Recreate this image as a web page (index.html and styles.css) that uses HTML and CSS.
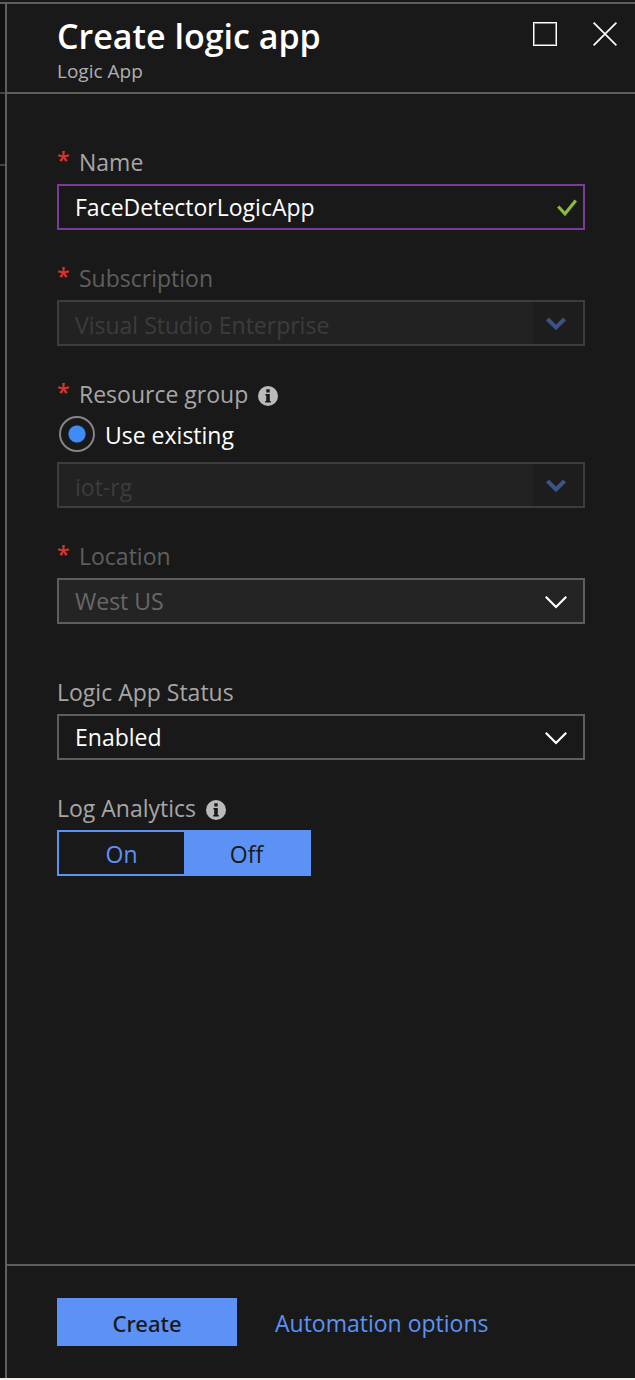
FILE: index.html
```html
<!DOCTYPE html>
<html lang="en">
<head>
<meta charset="utf-8">
<meta name="viewport" content="width=device-width, initial-scale=1">
<title>Create logic app</title>
<link rel="stylesheet" href="styles.css">
</head>
<body>
<div class="portal">
  <div class="previous-blade">
    <div class="previous-title"></div>
    <div class="previous-toolbar"></div>
    <div class="previous-body"></div>
  </div>
  <main class="blade">
    <header class="blade-header">
      <div class="titles">
        <h1 class="title">Create logic app</h1>
        <p class="subtitle">Logic App</p>
      </div>
      <div class="window-actions">
        <button class="icon-button" type="button" aria-label="Maximize">
          <svg width="24" height="24" viewBox="0 0 24 24" fill="none"><rect x="1.5" y="1.5" width="21" height="21" stroke="#8a8a88"/><rect x=".5" y=".5" width="23" height="23" stroke="#fff"/></svg>
        </button>
        <button class="icon-button" type="button" aria-label="Close">
          <svg width="24" height="24" viewBox="0 0 24 24" fill="none" stroke="#fff" stroke-width="1.7"><path d="M.6.6 23.4 23.4M23.4.6.6 23.4"/></svg>
        </button>
      </div>
    </header>

    <form class="form" id="create-form">
      <div class="field">
        <label class="label" for="name"><span class="required">*</span>Name</label>
        <div class="control">
          <input class="box box-valid" id="name" type="text" value="FaceDetectorLogicApp" spellcheck="false">
          <svg class="check" width="20" height="18" viewBox="0 0 20 18" fill="none" stroke="#8cba3a" stroke-width="3.2"><path d="M1.2 7.5 8 14.8 18.8 1.5"/></svg>
        </div>
      </div>

      <div class="field">
        <label class="label label-disabled" for="subscription"><span class="required">*</span>Subscription</label>
        <div class="control">
          <select class="box box-disabled" id="subscription" disabled><option>Visual Studio Enterprise</option></select>
          <span class="arrow arrow-panel"><svg width="20" height="14" viewBox="0 0 20 14" fill="none" stroke="#3a5488" stroke-width="4"><path d="M1.5 2 10 10.5 18.5 2"/></svg></span>
        </div>
      </div>

      <div class="field">
        <label class="label" for="group"><span class="required">*</span>Resource group
          <svg class="info" width="20" height="20" viewBox="0 0 20 20"><circle cx="10" cy="10" r="10" fill="#bababa"/><path fill="#191919" d="M8.3 3.3h3.4v3.2H8.3zM7.4 8h4.4v7h1v1.5H7.2V15h1V9.5h-.8z"/></svg>
        </label>
        <div class="radio-row">
          <input class="radio" id="existing" type="radio" name="group-mode" checked>
          <label class="radio-label" for="existing">Use existing</label>
        </div>
        <div class="control">
          <select class="box box-disabled" id="group" disabled><option>iot-rg</option></select>
          <span class="arrow arrow-panel"><svg width="20" height="14" viewBox="0 0 20 14" fill="none" stroke="#3a5488" stroke-width="4"><path d="M1.5 2 10 10.5 18.5 2"/></svg></span>
        </div>
      </div>

      <div class="field field-last">
        <label class="label label-disabled" for="location"><span class="required">*</span>Location</label>
        <div class="control">
          <select class="box box-locked" id="location" disabled><option>West US</option></select>
          <span class="arrow"><svg width="22" height="14" viewBox="0 0 22 14" fill="none" stroke="#fff" stroke-width="2.2"><path d="M.8 1.8 11 12 21.2 1.8"/></svg></span>
        </div>
      </div>

      <div class="field">
        <label class="label" for="status">Logic App Status</label>
        <div class="control">
          <select class="box" id="status"><option>Enabled</option></select>
          <span class="arrow"><svg width="22" height="14" viewBox="0 0 22 14" fill="none" stroke="#fff" stroke-width="2.2"><path d="M.8 1.8 11 12 21.2 1.8"/></svg></span>
        </div>
      </div>

      <div class="field">
        <div class="label" id="analytics">Log Analytics
          <svg class="info" width="20" height="20" viewBox="0 0 20 20"><circle cx="10" cy="10" r="10" fill="#bababa"/><path fill="#191919" d="M8.3 3.3h3.4v3.2H8.3zM7.4 8h4.4v7h1v1.5H7.2V15h1V9.5h-.8z"/></svg>
        </div>
        <div class="toggle" role="group" aria-labelledby="analytics">
          <button class="toggle-option" type="button" aria-pressed="false">On</button>
          <button class="toggle-option toggle-selected" type="button" aria-pressed="true">Off</button>
        </div>
      </div>
    </form>

    <footer class="blade-footer">
      <button class="create" type="submit" form="create-form">Create</button>
      <a class="link" href="#">Automation options</a>
    </footer>
  </main>
</div>
</body>
</html>
```
FILE: styles.css
```css
* {
  box-sizing: border-box;
}

body {
  margin: 0;
  background: #191919;
  color: #fff;
  font: 23px/32px "Segoe UI", "Open Sans", "Noto Sans", sans-serif;
}

button,
input,
select {
  font: inherit;
}

.portal {
  display: flex;
  min-height: 100vh;
  padding-top: 2px;
  border-bottom: 2px solid #f3f1f0;
}

.previous-blade {
  display: flex;
  flex-direction: column;
  flex: 0 0 5px;
  border-top: 2px solid #605e5c;
  background: #101010;
}

.previous-title {
  height: 90px;
  border-bottom: 2px solid #444342;
}

.previous-toolbar {
  height: 72px;
  border-bottom: 2px solid #444342;
}

.previous-body {
  flex: 1;
}

.blade {
  display: flex;
  flex: 1;
  flex-direction: column;
  border-top: 2px solid #605e5c;
  border-left: 2px solid #605e5c;
}

.blade-header {
  display: flex;
  justify-content: space-between;
  padding: 12px 18px 8px 50px;
  border-bottom: 2px solid #605e5c;
}

.title {
  margin: 0;
  font-size: 34px;
  font-weight: 600;
  line-height: 40px;
}

.subtitle {
  margin: 2px 0 0;
  color: #b0b0b0;
  font-size: 19px;
  line-height: 26px;
}

.window-actions {
  display: flex;
  align-items: flex-start;
  gap: 36px;
  padding-top: 6px;
}

.icon-button {
  display: flex;
  padding: 0;
  border: 0;
  background: none;
}

.form {
  display: flex;
  flex: 1;
  flex-direction: column;
  gap: 32px;
  padding: 52px 50px 32px;
}

.field {
  display: flex;
  flex-direction: column;
}

.field-last {
  margin-bottom: 20px;
}

.label {
  display: flex;
  align-items: center;
  margin-bottom: 6px;
  color: #a6a6a6;
}

.label-disabled {
  color: #5f5f5f;
}

.required {
  width: 22px;
  padding-bottom: 4px;
  color: #d93630;
  font-weight: 600;
  line-height: 28px;
}

.info {
  margin: 4px 0 0 10px;
}

.control {
  position: relative;
}

.box {
  display: block;
  width: 100%;
  height: 46px;
  padding: 0 56px 0 16px;
  border: 2px solid #605e5c;
  border-radius: 0;
  outline: 0;
  appearance: none;
  background: #191919;
  color: #fff;
  opacity: 1;
}

.box-valid {
  border-color: #7d3a9c;
}

.box-disabled {
  padding-top: 3px;
  border-color: #3d3d3d;
  background: #222;
  color: #3c3c3c;
}

.box-locked {
  background: #242424;
  color: #686868;
}

.check {
  position: absolute;
  top: 15px;
  right: 8px;
}

.arrow {
  position: absolute;
  top: 2px;
  right: 2px;
  bottom: 2px;
  display: flex;
  align-items: center;
  justify-content: center;
  width: 54px;
  padding-top: 2px;
  pointer-events: none;
}

.arrow-panel {
  width: 50px;
  padding-right: 4px;
  background: #1d1d1d;
}

.radio-row {
  display: flex;
  align-items: center;
  gap: 10px;
  margin: 0 0 10px 2px;
}

.radio {
  width: 36px;
  height: 36px;
  margin: 0;
  border: 2px solid #858585;
  border-radius: 50%;
  appearance: none;
  background: radial-gradient(circle, #3f8cf7 8px, transparent 9px);
}

.radio-label {
  padding-top: 2px;
}

.toggle {
  display: flex;
  width: 254px;
  height: 46px;
  border: 2px solid #5c92f6;
}

.toggle-option {
  flex: 1;
  padding: 2px 0 0;
  border: 0;
  background: #191919;
  color: #5c92f6;
}

.toggle-selected {
  background: #5c92f6;
  color: #191919;
}

.blade-footer {
  display: flex;
  align-items: center;
  gap: 38px;
  padding: 32px 50px;
  border-top: 2px solid #605e5c;
}

.create {
  width: 180px;
  height: 48px;
  padding: 2px 0 0;
  border: 0;
  background: #5c92f6;
  color: #191919;
  font-family: "Segoe UI", "Noto Sans", sans-serif;
  font-size: 22px;
  font-weight: 500;
}

.link {
  padding-top: 2px;
  color: #5c92f6;
  text-decoration: none;
}
```
